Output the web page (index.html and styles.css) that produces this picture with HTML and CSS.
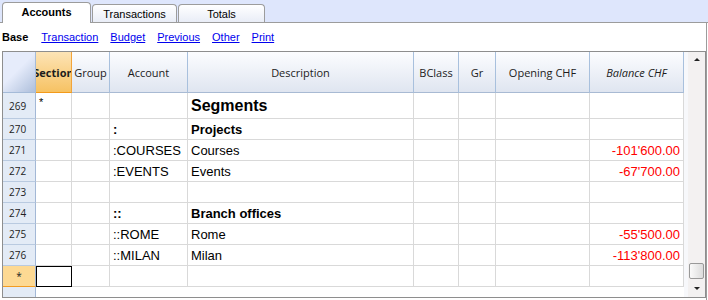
FILE: index.html
```html
<!DOCTYPE html>
<html lang="en">
<head>
    <meta charset="UTF-8">
    <title>Accounts</title>
    <link rel="stylesheet" href="styles.css">
</head>
<body>
    <div class="tabbar">
        <div class="tab active">Accounts</div>
        <div class="tab">Transactions</div>
        <div class="tab">Totals</div>
    </div>

    <div class="panel">
        <div class="views">
            <b>Base</b>
            <a href="#">Transaction</a>
            <a href="#">Budget</a>
            <a href="#">Previous</a>
            <a href="#">Other</a>
            <a href="#">Print</a>
        </div>

        <div class="sheet">
            <div class="table">
                <div class="row head">
                    <div class="corner"></div>
                    <div class="hd sel">Section</div>
                    <div class="hd">Group</div>
                    <div class="hd">Account</div>
                    <div class="hd">Description</div>
                    <div class="hd">BClass</div>
                    <div class="hd">Gr</div>
                    <div class="hd">Opening CHF</div>
                    <div class="hd italic">Balance CHF</div>
                </div>

                <div class="row tall">
                    <div class="num">269</div>
                    <div class="c top">*</div>
                    <div class="c"></div>
                    <div class="c"></div>
                    <div class="c big">Segments</div>
                    <div class="c"></div>
                    <div class="c"></div>
                    <div class="c"></div>
                    <div class="c"></div>
                </div>
                <div class="row">
                    <div class="num">270</div>
                    <div class="c"></div>
                    <div class="c"></div>
                    <div class="c bold">:</div>
                    <div class="c bold">Projects</div>
                    <div class="c"></div>
                    <div class="c"></div>
                    <div class="c"></div>
                    <div class="c"></div>
                </div>
                <div class="row">
                    <div class="num">271</div>
                    <div class="c"></div>
                    <div class="c"></div>
                    <div class="c">:COURSES</div>
                    <div class="c">Courses</div>
                    <div class="c"></div>
                    <div class="c"></div>
                    <div class="c"></div>
                    <div class="c amount">-101'600.00</div>
                </div>
                <div class="row">
                    <div class="num">272</div>
                    <div class="c"></div>
                    <div class="c"></div>
                    <div class="c">:EVENTS</div>
                    <div class="c">Events</div>
                    <div class="c"></div>
                    <div class="c"></div>
                    <div class="c"></div>
                    <div class="c amount">-67'700.00</div>
                </div>
                <div class="row">
                    <div class="num">273</div>
                    <div class="c"></div>
                    <div class="c"></div>
                    <div class="c"></div>
                    <div class="c"></div>
                    <div class="c"></div>
                    <div class="c"></div>
                    <div class="c"></div>
                    <div class="c"></div>
                </div>
                <div class="row">
                    <div class="num">274</div>
                    <div class="c"></div>
                    <div class="c"></div>
                    <div class="c bold">::</div>
                    <div class="c bold">Branch offices</div>
                    <div class="c"></div>
                    <div class="c"></div>
                    <div class="c"></div>
                    <div class="c"></div>
                </div>
                <div class="row">
                    <div class="num">275</div>
                    <div class="c"></div>
                    <div class="c"></div>
                    <div class="c">::ROME</div>
                    <div class="c">Rome</div>
                    <div class="c"></div>
                    <div class="c"></div>
                    <div class="c"></div>
                    <div class="c amount">-55'500.00</div>
                </div>
                <div class="row">
                    <div class="num">276</div>
                    <div class="c"></div>
                    <div class="c"></div>
                    <div class="c">::MILAN</div>
                    <div class="c">Milan</div>
                    <div class="c"></div>
                    <div class="c"></div>
                    <div class="c"></div>
                    <div class="c amount">-113'800.00</div>
                </div>
                <div class="row">
                    <div class="num current">*</div>
                    <div class="c selected"></div>
                    <div class="c"></div>
                    <div class="c"></div>
                    <div class="c"></div>
                    <div class="c"></div>
                    <div class="c"></div>
                    <div class="c"></div>
                    <div class="c"></div>
                </div>
                <div class="filler">
                    <div class="num-fill"></div>
                </div>
            </div>

            <div class="scroll">
                <div class="arrow up"></div>
                <div class="track"></div>
                <div class="thumb"></div>
                <div class="arrow down"></div>
            </div>
        </div>
    </div>
</body>
</html>
```

FILE: styles.css
```css
body {
    margin: 0;
    width: 708px;
    height: 300px;
    overflow: hidden;
    background: white;
    font-family: 'Liberation Sans', Arial, sans-serif;
    color: black;
}
.tabbar {
    height: 23px;
    box-sizing: border-box;
    background: #dee6fc;
    display: flex;
    align-items: flex-end;
    padding-left: 2px;
    border-bottom: 1px solid #9c9c9c;
}
.tab {
    width: 85px;
    height: 18px;
    box-sizing: border-box;
    margin-right: 1px;
    border: 1px solid #9c9c9c;
    border-bottom: none;
    border-radius: 4px 4px 0 0;
    background: linear-gradient(#ffffff, #e9edf7);
    display: flex;
    align-items: center;
    justify-content: center;
    font-size: 11px;
    color: #000;
}
.tab.active {
    width: 89px;
    height: 21px;
    margin-bottom: -1px;
    margin-right: 1px;
    background: white;
    font-weight: bold;
    padding-bottom: 2px;
}
.tab:last-child {
    width: 87px;
}
.panel {
    width: 707px;
    height: 277px;
    box-sizing: border-box;
    border-right: 1px solid #9c9c9c;
}
.views {
    height: 28px;
    display: flex;
    align-items: center;
    gap: 12px;
    padding-left: 2px;
    font-size: 11px;
}
.views b {
    margin-right: 1px;
}
.views a {
    color: #0000ee;
}
.sheet {
    margin-left: 2px;
    width: 704px;
    height: 247px;
    box-sizing: border-box;
    border: 1px solid #8e8e8e;
    display: flex;
}
.table {
    width: 681px;
}
.row {
    display: grid;
    grid-template-columns: 33px 36px 38px 78px 226px 45px 37px 94px 94px;
    height: 21px;
}
.row.head {
    height: 41px;
}
.row.tall {
    height: 26px;
}
.row > div {
    box-sizing: border-box;
    white-space: nowrap;
    overflow: hidden;
    display: flex;
    align-items: center;
}
.corner {
    background: linear-gradient(135deg, #e6ecfb 45%, #aebfdb 100%);
    border-right: 1px solid #a5bbd8;
    border-bottom: 1px solid #a5bbd8;
}
.hd {
    justify-content: center;
    background: linear-gradient(#fcfdff, #dfe5f0);
    border-right: 1px solid #a8c0dd;
    border-bottom: 1px solid #a8bad3;
    font-family: 'Open Sans', 'Liberation Sans', sans-serif;
    font-size: 11px;
    color: #1c1c1c;
}
.hd.sel {
    background: linear-gradient(#fde4b6, #f6c263);
    border-right: 1px solid #f2a43a;
    border-bottom: 1px solid #f39a1a;
    font-weight: bold;
}
.hd.italic {
    font-style: italic;
}
.num {
    background: #e3ebf6;
    border-right: 1px solid #a3b8d6;
    border-bottom: 1px solid #b9cae0;
    font-family: 'Open Sans', 'Liberation Sans', sans-serif;
    font-size: 10px;
    color: #222;
    padding-left: 6px;
}
.num.current {
    background: #fdd993;
    border-bottom: 1px solid #f29c22;
    justify-content: center;
    padding-left: 0;
}
.c {
    border-right: 1px solid #d9d9d9;
    border-bottom: 1px solid #d9d9d9;
    padding: 0 3px;
    font-size: 13px;
}
.c.top {
    align-items: flex-start;
    padding-top: 3px;
    font-size: 11px;
}
.c.big {
    font-size: 16px;
    font-weight: bold;
}
.c.bold {
    font-weight: bold;
}
.c.amount {
    justify-content: flex-end;
    color: #ff0000;
}
.c.selected {
    outline: 1px solid #000;
    outline-offset: -1px;
}
.filler {
    height: 10px;
}
.num-fill {
    width: 32px;
    height: 10px;
    background: #e3ebf6;
    border-right: 1px solid #a3b8d6;
}
.scroll {
    flex: 1;
    display: flex;
    flex-direction: column;
    background: #f3f1f1;
    border-left: 4px solid #f7f8fb;
}
.arrow {
    height: 17px;
    position: relative;
}
.arrow::after {
    content: "";
    position: absolute;
    left: 6px;
    border-left: 3px solid transparent;
    border-right: 3px solid transparent;
}
.arrow.up::after {
    top: 6px;
    border-bottom: 3px solid #222;
}
.arrow.down {
    height: 18px;
}
.arrow.down::after {
    top: 8px;
    border-top: 3px solid #222;
}
.track {
    flex: 1;
}
.thumb {
    height: 16px;
    margin: 0 1px;
    box-sizing: border-box;
    border: 1px solid #999;
    border-radius: 2px;
    background: linear-gradient(90deg, #fafafa, #dcdcdc);
}
```
